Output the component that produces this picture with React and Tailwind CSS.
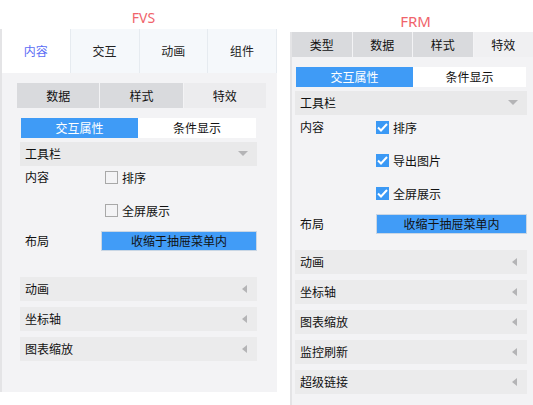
import React from 'react';

const font = { fontFamily: '"Microsoft YaHei", "Noto Sans CJK SC", "Noto Sans", sans-serif' };

// small gray triangles used on the collapsible rows
const ArrowLeft = () => (
    <svg width="6" height="8" viewBox="0 0 6 8" className="shrink-0">
        <path d="M5 0 L5 8 L0 4 Z" fill="#b4b4b6" />
    </svg>
);

const ArrowDown = () => (
    <svg width="10" height="6" viewBox="0 0 10 6" className="shrink-0">
        <path d="M0 0 L10 0 L5 5 Z" fill="#b4b4b6" />
    </svg>
);

const Box = ({ checked }) =>
    checked ? (
        <span className="w-[13px] h-[13px] bg-[#3b99f5] flex items-center justify-center shrink-0">
            <svg width="11" height="9" viewBox="0 0 11 9">
                <path d="M1 4.5 L4 7.5 L10 1" stroke="#fff" strokeWidth="2" fill="none" />
            </svg>
        </span>
    ) : (
        <span className="w-[13px] h-[13px] border border-[#a8a8a8] shrink-0" />
    );

const Option = ({ label, checked, className = '' }) => (
    <div className={`flex items-center gap-[4px] ${className}`}>
        <Box checked={checked} />
        <span>{label}</span>
    </div>
);

const Section = ({ label }) => (
    <div className="h-[24px] bg-[#ebebec] flex items-center justify-between pl-[5px] pr-[9px]">
        <span>{label}</span>
        <ArrowLeft />
    </div>
);

const Segment = ({ className = '' }) => (
    <div className={`flex h-[20px] ${className}`}>
        <div className="w-[117px] bg-[#3f9bf6] text-white flex items-center justify-center">交互属性</div>
        <div className="flex-1 bg-white flex items-center justify-center">条件显示</div>
    </div>
);

const ToolbarHeader = ({ className = '' }) => (
    <div className={`h-[24px] bg-[#e9e9ea] flex items-center justify-between pl-[5px] pr-[9px] ${className}`}>
        <span>工具栏</span>
        <ArrowDown />
    </div>
);

const LayoutRow = ({ className = '' }) => (
    <div className={`flex items-center ${className}`}>
        <span className="w-[81px] pl-[5px]">布局</span>
        <div className="flex-1 h-[20px] bg-[#419cf7] border border-[#c9d6e4] flex items-center justify-center">
            收缩于抽屉菜单内
        </div>
    </div>
);

const FvsPanel = () => {
    const tabs = ['内容', '交互', '动画', '组件'];
    return (
        <div className="w-[277px] flex flex-col">
            <div className="h-[29px] flex items-center justify-center pt-[6px] pl-[10px] text-[14px] text-[#f0636b]" style={{ fontFamily: '"Noto Sans", sans-serif' }}>
                FVS
            </div>
            <div className="h-[363px] bg-[#f3f3f5] border-l-2 border-[#e4e4e6] flex flex-col">
                <div className="flex h-[44px] bg-[#f5f8fb]">
                    {tabs.map((t, i) => (
                        <div
                            key={t}
                            className={`flex-1 flex items-center justify-center border-r border-[#e6ebf0] ${
                                i === 0 ? 'bg-white text-[#5a6cf5]' : 'text-[#222]'
                            }`}
                        >
                            {t}
                        </div>
                    ))}
                </div>
                <div className="pl-[15px] pr-[11px] mt-[10px]">
                    <div className="flex h-[25px] gap-[1px] bg-[#f3f3f5]">
                        <div className="flex-1 bg-[#d9dadd] flex items-center justify-center">数据</div>
                        <div className="flex-1 bg-[#d9dadd] flex items-center justify-center">样式</div>
                        <div className="flex-1 bg-[#ececee] flex items-center justify-center">特效</div>
                    </div>
                </div>
                <div className="pl-[18px] pr-[20px]">
                    <Segment className="mt-[10px] ml-[1px] mr-[1px]" />
                    <ToolbarHeader className="mt-[4px]" />
                    <div className="flex items-start mt-[5px]">
                        <span className="w-[85px] pl-[5px]">内容</span>
                        <div className="flex flex-col gap-[20px]">
                            <Option label="排序" />
                            <Option label="全屏展示" />
                        </div>
                    </div>
                    <LayoutRow className="mt-[14px]" />
                    <div className="flex flex-col gap-[6px] mt-[26px]">
                        <Section label="动画" />
                        <Section label="坐标轴" />
                        <Section label="图表缩放" />
                    </div>
                </div>
            </div>
        </div>
    );
};

const FrmPanel = () => {
    const tabs = ['类型', '数据', '样式', '特效'];
    return (
        <div className="w-[243px] flex flex-col">
            <div className="h-[32px] flex items-center justify-center pt-[11px] pl-[8px] text-[15px] text-[#f0636b]" style={{ fontFamily: '"Noto Sans", sans-serif' }}>
                FRM
            </div>
            <div className="flex-1 bg-[#f3f3f5] border-l-2 border-[#e4e4e6] flex flex-col">
                <div className="flex h-[25px] gap-[1px] bg-[#f3f3f5]">
                    {tabs.map((t, i) => (
                        <div
                            key={t}
                            className={`flex-1 flex items-center justify-center ${i === 3 ? 'bg-[#f0f0f2]' : 'bg-[#d9dadd]'}`}
                        >
                            {t}
                        </div>
                    ))}
                </div>
                <div className="pl-[3px] pr-[6px]">
                    <Segment className="mt-[10px] ml-[1px] mr-[1px]" />
                    <ToolbarHeader className="mt-[4px]" />
                    <div className="flex items-start mt-[6px]">
                        <span className="w-[81px] pl-[5px]">内容</span>
                        <div className="flex flex-col gap-[20px]">
                            <Option label="排序" checked />
                            <Option label="导出图片" checked />
                            <Option label="全屏展示" checked />
                        </div>
                    </div>
                    <LayoutRow className="mt-[14px]" />
                    <div className="flex flex-col gap-[6px] mt-[16px]">
                        <Section label="动画" />
                        <Section label="坐标轴" />
                        <Section label="图表缩放" />
                        <Section label="监控刷新" />
                        <Section label="超级链接" />
                    </div>
                </div>
            </div>
        </div>
    );
};

export default function App() {
    return (
        <div className="w-[533px] h-[405px] bg-white flex gap-[13px] text-[12px] text-[#111] leading-none overflow-hidden" style={font}>
            <FvsPanel />
            <FrmPanel />
        </div>
    );
}
